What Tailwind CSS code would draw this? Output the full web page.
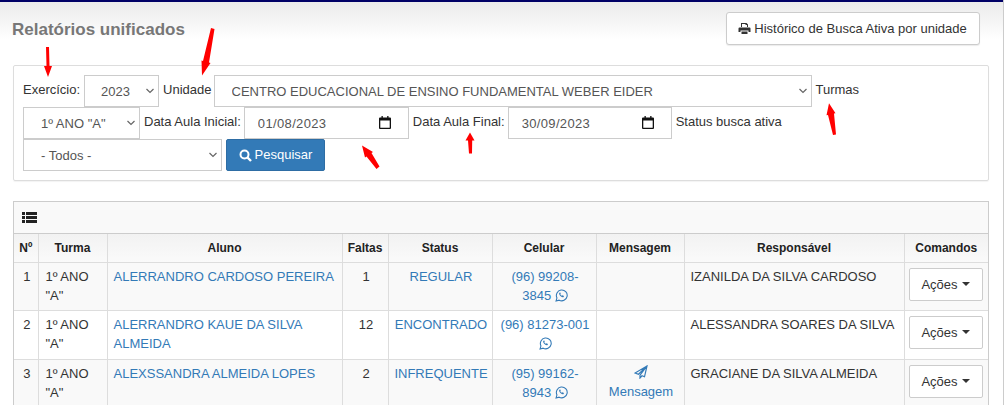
<!DOCTYPE html>
<html lang="pt-BR">
<head>
  <meta charset="UTF-8" />
  <title>Relatórios unificados</title>
  <script src="https://cdn.jsdelivr.net/npm/@tailwindcss/browser@4"></script>
</head>
<body class="relative h-[405px] overflow-hidden border-r border-[#ccc] bg-white font-['Liberation_Sans',Arial,sans-serif] text-[13px] leading-[19px] text-[#333]">

  <!-- Header -->
  <div class="h-[65px] border-t-2 border-[#000066] bg-gradient-to-b from-[#ebebeb] to-white to-60%">
    <div class="flex items-start justify-between pl-3 pr-[23px]">
      <h1 class="mt-[17px] text-[17px] font-bold leading-[22px] text-[#777]">Relatórios unificados</h1>
      <button class="mt-[10px] flex h-[33px] w-[254px] items-center justify-center gap-[3px] rounded-[3px] border border-[#ccc] bg-white pb-[1px] shadow-[0_1px_1px_rgba(0,0,0,0.08)]">
        <svg class="-ml-[1px] h-[13px] w-[13px] fill-[#333]" viewBox="0 0 13 13"><path d="M3 1h5.500L10 2.500V5H9V3H7.500V2H4v3H3zM1.500 5.500h10A1 1 0 0 1 12.500 6.500V10H10.500V8.500h-8V10H.5V6.500a1 1 0 0 1 1-1zM3.500 9.500h6V12h-6z"/></svg>
        Histórico de Busca Ativa por unidade
      </button>
    </div>
  </div>

  <!-- Filtros -->
  <div class="mx-[13px] h-[116px] w-[976px] rounded-[2px] border border-[#ddd] pt-[9px] pl-[9px] shadow-[0_1px_1px_rgba(0,0,0,0.05)]">
    <div class="flex h-[32px] items-start">
      <label class="mt-[5px] mr-[4px]">Exercício:</label>
      <div class="relative w-[75px]">
        <select class="h-[32px] w-full appearance-none border border-[#ccc] bg-white pl-[16px] text-[13px] text-[#555]"><option>2023</option></select>
        <svg class="absolute top-[13px] right-[5px] h-[6px] w-[8px]" viewBox="0 0 8 6" fill="none" stroke="#666" stroke-width="1.200"><path d="M.5 1l3.500 3.500L7.500 1"/></svg>
      </div>
      <label class="mt-[5px] ml-[4px] mr-[2px]">Unidade</label>
      <div class="relative w-[598px]">
        <select class="h-[32px] w-full appearance-none border border-[#ccc] bg-white pl-[17px] text-[13px] text-[#555]"><option>CENTRO EDUCACIONAL DE ENSINO FUNDAMENTAL WEBER EIDER</option></select>
        <svg class="absolute top-[13px] right-[5px] h-[6px] w-[8px]" viewBox="0 0 8 6" fill="none" stroke="#666" stroke-width="1.200"><path d="M.5 1l3.500 3.500L7.500 1"/></svg>
      </div>
      <label class="mt-[5px] ml-[4px]">Turmas</label>
    </div>
    <div class="flex h-[32px] items-start">
      <div class="relative w-[117px]">
        <select class="h-[32px] w-full appearance-none border border-[#ccc] bg-white pl-[17px] text-[13px] text-[#555]"><option>1º ANO "A"</option></select>
        <svg class="absolute top-[13px] right-[5px] h-[6px] w-[8px]" viewBox="0 0 8 6" fill="none" stroke="#666" stroke-width="1.200"><path d="M.5 1l3.500 3.500L7.500 1"/></svg>
      </div>
      <label class="mt-[5px] ml-[4px] mr-[3px]">Data Aula Inicial:</label>
      <div class="flex h-[32px] w-[165px] items-center border border-[#ccc] pl-[13px] pr-[16px] text-[#555]">
        <input class="w-full tracking-[0.35px] outline-none" type="text" value="01/08/2023" />
        <svg class="h-[14px] w-[14px] shrink-0" viewBox="0 0 14 14"><path fill="#111" d="M2 1.500h10a1 1 0 0 1 1 1V12a1 1 0 0 1-1 1H2a1 1 0 0 1-1-1V2.500a1 1 0 0 1 1-1zM2.300 4.500v7.200h9.400V4.500z"/><path fill="#111" d="M3.500 0h1.300v2H3.500zM9.200 0h1.300v2H9.200z"/></svg>
      </div>
      <label class="mt-[5px] ml-[4px] mr-[3px]">Data Aula Final:</label>
      <div class="flex h-[32px] w-[164px] items-center border border-[#ccc] pl-[13px] pr-[16px] text-[#555]">
        <input class="w-full tracking-[0.35px] outline-none" type="text" value="30/09/2023" />
        <svg class="h-[14px] w-[14px] shrink-0" viewBox="0 0 14 14"><path fill="#111" d="M2 1.500h10a1 1 0 0 1 1 1V12a1 1 0 0 1-1 1H2a1 1 0 0 1-1-1V2.500a1 1 0 0 1 1-1zM2.300 4.500v7.200h9.400V4.500z"/><path fill="#111" d="M3.500 0h1.300v2H3.500zM9.200 0h1.300v2H9.200z"/></svg>
      </div>
      <label class="mt-[5px] ml-[4px]">Status busca ativa</label>
    </div>
    <div class="flex h-[32px] items-start gap-[4px]">
      <div class="relative w-[199px]">
        <select class="h-[32px] w-full appearance-none border border-[#ccc] bg-white pl-[17px] text-[13px] text-[#555]"><option>- Todos -</option></select>
        <svg class="absolute top-[13px] right-[5px] h-[6px] w-[8px]" viewBox="0 0 8 6" fill="none" stroke="#666" stroke-width="1.200"><path d="M.5 1l3.500 3.500L7.500 1"/></svg>
      </div>
      <button class="flex h-[32px] w-[99px] items-center justify-center gap-[3px] rounded-[2px] border border-[#2e6da4] bg-[#337ab7] pb-[2px] text-white">
        <svg class="mt-[2px] h-[13px] w-[13px]" viewBox="0 0 13 13" fill="none" stroke="#fff"><circle cx="5.500" cy="5.500" r="4" stroke-width="2"/><path d="M8.500 8.500L12 12" stroke-width="2.400"/></svg>
        Pesquisar
      </button>
    </div>
  </div>

  <!-- Tabela -->
  <div class="mx-[13px] mt-[20px] w-[976px] border border-[#ccc]">
    <div class="flex h-[32px] items-center border-b border-[#ccc] bg-[#f9f9f9] pl-[8px]">
      <svg class="h-[11px] w-[15px] fill-[#222]" viewBox="0 0 15 11"><path d="M0 0h3v3H0zM4 0h11v3H4zM0 4h3v3H0zM4 4h11v3H4zM0 8h3v3H0zM4 8h11v3H4z"/></svg>
    </div>
    <table class="w-[974px] table-fixed border-collapse">
      <colgroup>
        <col class="w-[24px]" /><col class="w-[69px]" /><col class="w-[235px]" /><col class="w-[46px]" /><col class="w-[104px]" /><col class="w-[104px]" /><col class="w-[88px]" /><col class="w-[220px]" /><col class="w-[84px]" />
      </colgroup>
      <thead>
        <tr class="h-[28px] bg-gradient-to-b from-[#f2f2f2] to-[#fafafa] text-[12px] font-bold text-[#222]">
          <th class="border-r border-b border-[#ddd] pt-[2px]">Nº</th>
          <th class="border-r border-b border-[#ddd] pt-[2px]">Turma</th>
          <th class="border-r border-b border-[#ddd] pt-[2px]">Aluno</th>
          <th class="border-r border-b border-[#ddd] pt-[2px]">Faltas</th>
          <th class="border-r border-b border-[#ddd] pt-[2px]">Status</th>
          <th class="border-r border-b border-[#ddd] pt-[2px]">Celular</th>
          <th class="border-r border-b border-[#ddd] pt-[2px]">Mensagem</th>
          <th class="border-r border-b border-[#ddd] pt-[2px]">Responsável</th>
          <th class="border-b border-[#ddd] pt-[2px]">Comandos</th>
        </tr>
      </thead>
      <tbody>
        <tr class="h-[48px] bg-[#f9f9f9] align-top">
          <td class="border-r border-b border-[#ddd] pl-[2px] pt-[4px] text-center">1</td>
          <td class="border-r border-b border-[#ddd] pl-[7px] pr-[5px] pt-[4px]">1º ANO "A"</td>
          <td class="border-r border-b border-[#ddd] pl-[6px] pr-[4px] pt-[4px] text-[#337ab7]">ALERRANDRO CARDOSO PEREIRA</td>
          <td class="border-r border-b border-[#ddd] pl-[2px] pt-[4px] text-center">1</td>
          <td class="border-r border-b border-[#ddd] pl-[2px] pt-[4px] text-center text-[#337ab7]">REGULAR</td>
          <td class="border-r border-b border-[#ddd] pl-[7px] pr-[5px] pt-[4px] text-center text-[#337ab7]">(96) 99208-3845 <svg class="inline h-[13px] w-[13px] align-[-2px]" viewBox="0 0 12 12" fill="none" stroke="#337ab7"><path d="M1 11l.8-2.800A5 5 0 1 1 3.800 10.300z"/><path d="M4 3.500c-.6 1 .3 2.500 1.300 3.300s1.900 1.200 2.700.6l.2-1-1.200-.6-.6.5c-.7-.3-1.200-.9-1.500-1.500l.4-.6L4.900 3.200z" fill="#337ab7" stroke="none"/></svg></td>
          <td class="border-r border-b border-[#ddd]"></td>
          <td class="border-r border-b border-[#ddd] pl-[6px] pr-[4px] pt-[4px]">IZANILDA DA SILVA CARDOSO</td>
          <td class="border-b border-[#ddd] px-[4px] pt-[5px]"><button class="flex h-[33px] w-[74px] items-center justify-center gap-[4px] rounded-[2px] border border-[#ccc] bg-white">Ações <span class="border-x-[4px] border-t-[4px] border-x-transparent border-t-[#333]"></span></button></td>
        </tr>
        <tr class="h-[49px] bg-white align-top">
          <td class="border-r border-b border-[#ddd] pl-[2px] pt-[4px] text-center">2</td>
          <td class="border-r border-b border-[#ddd] pl-[7px] pr-[5px] pt-[4px]">1º ANO "A"</td>
          <td class="border-r border-b border-[#ddd] pl-[6px] pr-[4px] pt-[4px] text-[#337ab7]">ALERRANDRO KAUE DA SILVA ALMEIDA</td>
          <td class="border-r border-b border-[#ddd] pl-[2px] pt-[4px] text-center">12</td>
          <td class="border-r border-b border-[#ddd] pl-[2px] pt-[4px] text-center text-[#337ab7]">ENCONTRADO</td>
          <td class="border-r border-b border-[#ddd] pl-[7px] pr-[5px] pt-[4px] text-center text-[#337ab7]">(96) 81273-001 <svg class="inline h-[13px] w-[13px] align-[-2px]" viewBox="0 0 12 12" fill="none" stroke="#337ab7"><path d="M1 11l.8-2.800A5 5 0 1 1 3.800 10.300z"/><path d="M4 3.500c-.6 1 .3 2.500 1.300 3.300s1.900 1.200 2.700.6l.2-1-1.200-.6-.6.5c-.7-.3-1.200-.9-1.500-1.500l.4-.6L4.900 3.200z" fill="#337ab7" stroke="none"/></svg></td>
          <td class="border-r border-b border-[#ddd]"></td>
          <td class="border-r border-b border-[#ddd] pl-[6px] pr-[4px] pt-[4px]">ALESSANDRA SOARES DA SILVA</td>
          <td class="border-b border-[#ddd] px-[4px] pt-[5px]"><button class="flex h-[33px] w-[74px] items-center justify-center gap-[4px] rounded-[2px] border border-[#ccc] bg-white">Ações <span class="border-x-[4px] border-t-[4px] border-x-transparent border-t-[#333]"></span></button></td>
        </tr>
        <tr class="h-[49px] bg-[#f9f9f9] align-top">
          <td class="border-r border-[#ddd] pl-[2px] pt-[4px] text-center">3</td>
          <td class="border-r border-[#ddd] pl-[7px] pr-[5px] pt-[4px]">1º ANO "A"</td>
          <td class="border-r border-[#ddd] pl-[6px] pr-[4px] pt-[4px] text-[#337ab7]">ALEXSSANDRA ALMEIDA LOPES</td>
          <td class="border-r border-[#ddd] pl-[2px] pt-[4px] text-center">2</td>
          <td class="border-r border-[#ddd] pl-[2px] pt-[4px] text-center text-[#337ab7]">INFREQUENTE</td>
          <td class="border-r border-[#ddd] pl-[7px] pr-[5px] pt-[4px] text-center text-[#337ab7]">(95) 99162-8943 <svg class="inline h-[13px] w-[13px] align-[-2px]" viewBox="0 0 12 12" fill="none" stroke="#337ab7"><path d="M1 11l.8-2.800A5 5 0 1 1 3.800 10.300z"/><path d="M4 3.500c-.6 1 .3 2.500 1.300 3.300s1.900 1.200 2.700.6l.2-1-1.200-.6-.6.5c-.7-.3-1.200-.9-1.500-1.500l.4-.6L4.900 3.200z" fill="#337ab7" stroke="none"/></svg></td>
          <td class="border-r border-[#ddd] pl-[2px] pt-[5px] text-center text-[#337ab7]"><svg class="mx-auto mb-[3px] h-[14px] w-[14px]" viewBox="0 0 14 14" fill="none" stroke="#337ab7" stroke-width="1.200"><path d="M13 1L1 8l3.500 1.300L13 1 6 10.200V13l2-2.200 2.500 1z"/></svg>Mensagem</td>
          <td class="border-r border-[#ddd] pl-[6px] pr-[4px] pt-[4px]">GRACIANE DA SILVA ALMEIDA</td>
          <td class="px-[4px] pt-[5px]"><button class="flex h-[33px] w-[74px] items-center justify-center gap-[4px] rounded-[2px] border border-[#ccc] bg-white">Ações <span class="border-x-[4px] border-t-[4px] border-x-transparent border-t-[#333]"></span></button></td>
        </tr>
      </tbody>
    </table>
  </div>

  <!-- Setas vermelhas por cima da captura -->
  <svg class="pointer-events-none absolute top-0 left-0 h-[405px] w-[1004px]" viewBox="0 0 1004 405" fill="#f00" stroke="none">
    <path d="M46 47h3l.5 19h2.500L48 77l-4-11h2.500z"/>
    <path d="M211 28l3.500 1-5.500 33.500 1.500.5-8.500 12.500-.5-15 1.500.5z"/>
    <path d="M833 135l3-.5-2-21 1.500-.3-6.500-10-2.500 12 1.500-.2z"/>
    <path d="M469 153.500h3l.2-13h2.300l-4.500-8-4.500 8h2.500z"/>
    <path d="M376.500 169l3-2.500-8-13.500 1.500-1-11-6.500 3 12 1.500-1z"/>
  </svg>
</body>
</html>
